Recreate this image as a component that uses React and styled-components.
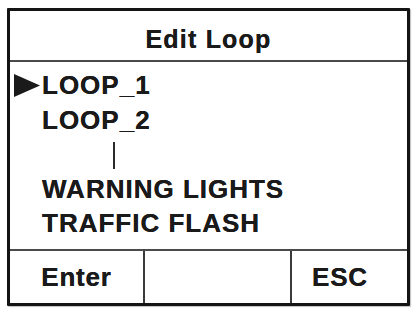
import React from 'react';
import styled, { createGlobalStyle } from 'styled-components';

const Global = createGlobalStyle`
  html, body {
    margin: 0;
    padding: 0;
    background: #ffffff;
  }
  body {
    font-family: "Liberation Sans", Arial, sans-serif;
    color: #1a1a1a;
  }
`;

const Page = styled.div`
  width: 414px;
  height: 310px;
  padding: 8px 4px 4px 7px;
  box-sizing: border-box;
`;

const Screen = styled.div`
  width: 403px;
  height: 298px;
  box-sizing: border-box;
  border: 3px solid #141414;
  border-radius: 1px;
  display: flex;
  flex-direction: column;
  box-shadow: 1px 1px 1px rgba(0, 0, 0, 0.25);
`;

const Header = styled.div`
  height: 51px;
  box-sizing: border-box;
  border-bottom: 2px solid #4a4a4a;
  display: flex;
  align-items: center;
  justify-content: center;
  padding-top: 7px;
  font-size: 25px;
  font-weight: bold;
  letter-spacing: 1.2px;
  text-shadow: 0 0 0.6px #1a1a1a;
`;

const List = styled.div`
  height: 189px;
  box-sizing: border-box;
  border-bottom: 2px solid #4a4a4a;
  padding-top: 6px;
`;

const Row = styled.div`
  display: flex;
  align-items: center;
  height: 34.5px;
  font-size: 26px;
  font-weight: bold;
  letter-spacing: 1px;
  line-height: 34.5px;
  text-shadow: 0 0 0.6px #1a1a1a;
`;

const Marker = styled.span`
  width: 32px;
  display: flex;
  align-items: center;
  padding-left: 4px;
  box-sizing: border-box;
`;

const Gap = styled.div`
  height: 34.5px;
  display: flex;
  align-items: center;
  padding-left: 103px;
`;

const Bar = styled.span`
  width: 2px;
  height: 27px;
  background: #2a2a2a;
  margin-top: 2px;
`;

const Footer = styled.div`
  flex: 1;
  display: grid;
  grid-template-columns: 135px 147px 1fr;
`;

const Key = styled.div`
  display: flex;
  align-items: center;
  justify-content: ${p => (p.$pad ? 'flex-start' : 'center')};
  padding-left: ${p => p.$pad || 0}px;
  padding-top: 1px;
  border-right: ${p => (p.$last ? 'none' : '2px solid #3a3a3a')};
  font-size: 26px;
  font-weight: bold;
  letter-spacing: 0.8px;
  text-shadow: 0 0 0.6px #1a1a1a;
`;

const items = [
  { label: 'LOOP_1', active: true },
  { label: 'LOOP_2' },
  { gap: true },
  { label: 'WARNING LIGHTS' },
  { label: 'TRAFFIC FLASH' },
];

export default function App() {
  return (
    <Page>
      <Global />
      <Screen>
        <Header>Edit Loop</Header>
        <List>
          {items.map((it, i) =>
            it.gap ? (
              <Gap key={i}><Bar /></Gap>
            ) : (
              <Row key={i}>
                <Marker>
                  {it.active && (
                    <svg width="26" height="23" viewBox="0 0 26 23">
                      <polygon points="0,0 26,11.5 0,23" fill="#1a1a1a" />
                    </svg>
                  )}
                </Marker>
                {it.label}
              </Row>
            )
          )}
        </List>
        <Footer>
          <Key>Enter</Key>
          <Key />
          <Key $last $pad={20}>ESC</Key>
        </Footer>
      </Screen>
    </Page>
  );
}
